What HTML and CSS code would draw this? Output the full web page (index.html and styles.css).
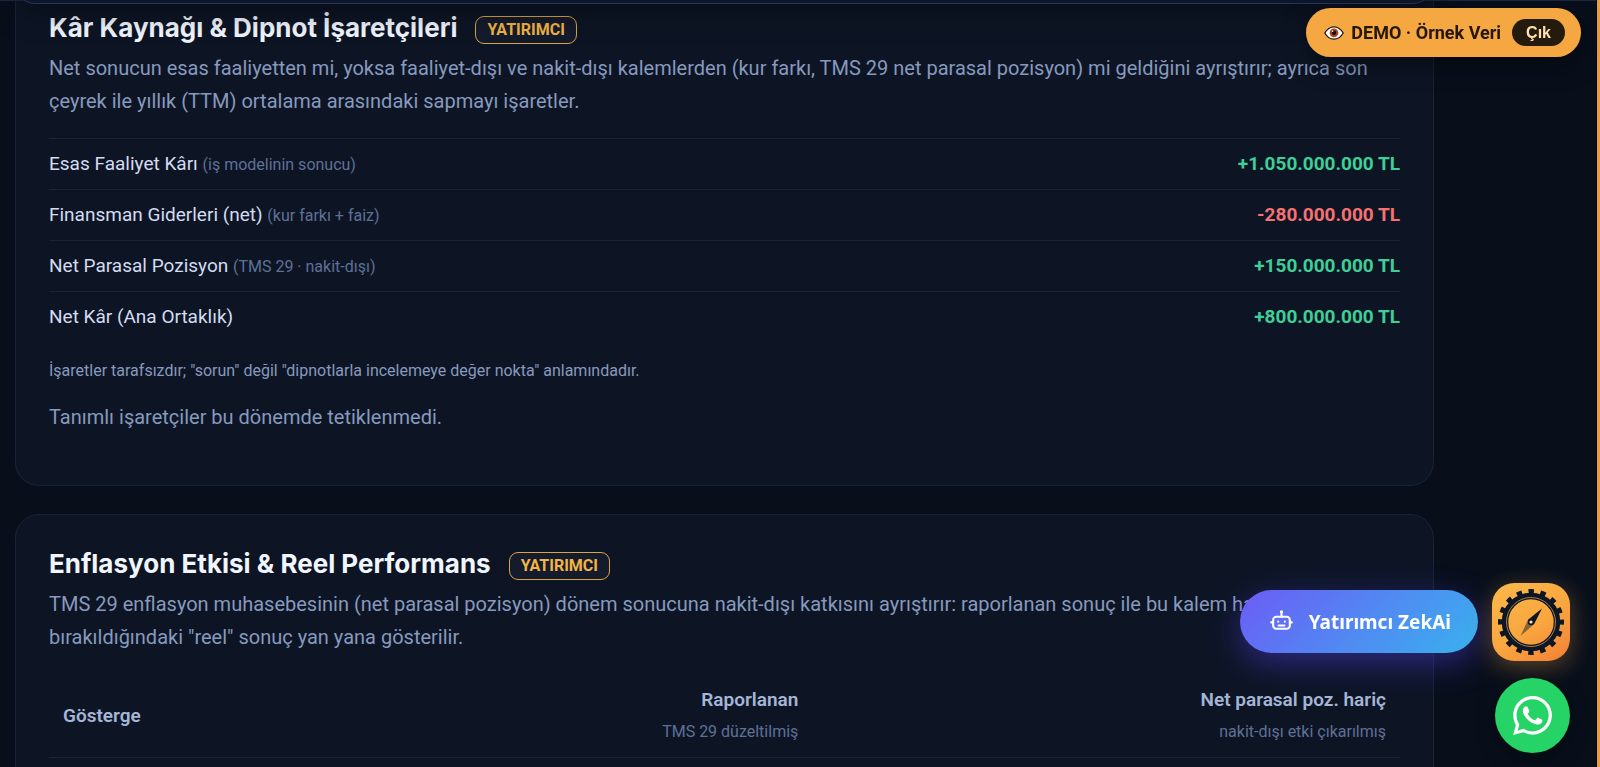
FILE: index.html
```
<!DOCTYPE html>
<html lang="tr">
<head>
<meta charset="utf-8">
<title>Yatırımcı Paneli</title>
<link rel="stylesheet" href="styles.css">
</head>
<body>
<div class="topbar"><div class="tabs"></div></div>

<main class="content">
  <section class="card card-first">
    <h2 class="card-title">Kâr Kaynağı &amp; Dipnot İşaretçileri <span class="badge">YATIRIMCI</span></h2>
    <p class="lead">Net sonucun esas faaliyetten mi, yoksa faaliyet-dışı ve nakit-dışı kalemlerden (kur farkı, TMS 29 net parasal pozisyon) mi geldiğini ayrıştırır; ayrıca son çeyrek ile yıllık (TTM) ortalama arasındaki sapmayı işaretler.</p>
    <dl class="rows">
      <div class="row"><dt>Esas Faaliyet Kârı <small>(iş modelinin sonucu)</small></dt><dd class="pos">+1.050.000.000 TL</dd></div>
      <div class="row"><dt>Finansman Giderleri (net) <small>(kur farkı + faiz)</small></dt><dd class="neg">-280.000.000 TL</dd></div>
      <div class="row"><dt>Net Parasal Pozisyon <small>(TMS 29 · nakit-dışı)</small></dt><dd class="pos">+150.000.000 TL</dd></div>
      <div class="row"><dt>Net Kâr (Ana Ortaklık)</dt><dd class="pos">+800.000.000 TL</dd></div>
    </dl>
    <p class="note">İşaretler tarafsızdır; "sorun" değil "dipnotlarla incelemeye değer nokta" anlamındadır.</p>
    <p class="lead">Tanımlı işaretçiler bu dönemde tetiklenmedi.</p>
  </section>

  <section class="card">
    <h2 class="card-title">Enflasyon Etkisi &amp; Reel Performans <span class="badge">YATIRIMCI</span></h2>
    <p class="lead">TMS 29 enflasyon muhasebesinin (net parasal pozisyon) dönem sonucuna nakit-dışı katkısını ayrıştırır: raporlanan sonuç ile bu kalem hariç bırakıldığındaki "reel" sonuç yan yana gösterilir.</p>
    <table class="compare">
      <thead>
        <tr>
          <th class="col-name" scope="col">Gösterge</th>
          <th class="col-num" scope="col">Raporlanan<small>TMS 29 düzeltilmiş</small></th>
          <th class="col-num" scope="col">Net parasal poz. hariç<small>nakit-dışı etki çıkarılmış</small></th>
        </tr>
      </thead>
    </table>
  </section>
</main>

<div class="edge"></div>

<div class="demo">
  <svg class="eye" viewBox="0 0 20 14" aria-hidden="true">
    <path d="M.8 7C3.200 2.800 6.300.8 10 .8S16.800 2.800 19.200 7c-2.400 4.200-5.500 6.200-9.200 6.200S3.200 11.200.8 7z" fill="#fff" stroke="#1a120a" stroke-width="1.200"/>
    <circle cx="10" cy="6.800" r="4.400" fill="#a8432a"/>
    <circle cx="10" cy="6.800" r="2.200" fill="#1a0d08"/>
    <circle cx="8.600" cy="5.300" r=".8" fill="#fff"/>
  </svg>
  <span>DEMO · Örnek Veri</span>
  <button class="exit" type="button">Çık</button>
</div>

<div class="dock">
  <button class="ai" type="button">
    <svg class="bot" viewBox="0 0 24 24" fill="none" stroke="#fff" stroke-width="2" stroke-linecap="round" stroke-linejoin="round" aria-hidden="true">
      <rect x="4" y="7.500" width="16" height="11.500" rx="3"/>
      <path d="M12 7.500V3M2 12.800h2M20 12.800h2M9.200 15.800h5.600"/>
      <path d="M8.800 12v.2M15.200 12v.2"/>
      <circle cx="12" cy="2.600" r=".5"/>
    </svg>
    <span>Yatırımcı ZekAi</span>
  </button>
  <div class="dock-side">
    <button class="compass" type="button" aria-label="Pusula">
      <svg viewBox="0 0 78 78" aria-hidden="true">
        <circle cx="39" cy="39" r="30.500" fill="none" stroke="#0d1624" stroke-width="5" stroke-dasharray="5.400 6.578" stroke-dashoffset="2.700"/>
        <circle cx="39" cy="39" r="26" fill="none" stroke="#0d1624" stroke-width="6.500"/>
        <circle cx="39" cy="39" r="24.500" fill="none" stroke="#d9973c" stroke-width=".8"/>
        <path d="M50 25.500 42 41.200 36 36.800z" fill="#0d1624"/>
        <path d="M28.500 53 42 41.200 36 36.800z" fill="#8a6330"/>
        <circle cx="39" cy="39" r="3.200" fill="#0d1624"/>
        <circle cx="39" cy="39" r="1.600" fill="#fbe3b0"/>
      </svg>
    </button>
    <a class="whatsapp" href="#whatsapp" aria-label="WhatsApp">
      <svg viewBox="0 0 24 24" fill="#fff" aria-hidden="true"><path d="M17.472 14.382c-.297-.149-1.758-.867-2.030-.967-.273-.099-.471-.148-.670.150-.197.297-.767.966-.940 1.164-.173.199-.347.223-.644.075-.297-.150-1.255-.463-2.390-1.475-.883-.788-1.480-1.761-1.653-2.059-.173-.297-.018-.458.130-.606.134-.133.298-.347.446-.520.149-.174.198-.298.298-.497.099-.198.050-.371-.025-.520-.075-.149-.669-1.612-.916-2.207-.242-.579-.487-.500-.669-.510-.173-.008-.371-.010-.570-.010-.198 0-.520.074-.792.372-.272.297-1.040 1.016-1.040 2.479 0 1.462 1.065 2.875 1.213 3.074.149.198 2.096 3.200 5.077 4.487.709.306 1.262.489 1.694.625.712.227 1.360.195 1.871.118.571-.085 1.758-.719 2.006-1.413.248-.694.248-1.289.173-1.413-.074-.124-.272-.198-.570-.347m-5.421 7.403h-.004a9.870 9.870 0 01-5.031-1.378l-.361-.214-3.741.982.998-3.648-.235-.374a9.860 9.860 0 01-1.510-5.260c.001-5.450 4.436-9.884 9.888-9.884 2.640 0 5.122 1.030 6.988 2.898a9.825 9.825 0 012.893 6.994c-.003 5.450-4.437 9.884-9.885 9.884m8.413-18.297A11.815 11.815 0 0012.050 0C5.495 0 .160 5.335.157 11.892c0 2.096.547 4.142 1.588 5.945L.057 24l6.305-1.654a11.882 11.882 0 005.683 1.448h.005c6.554 0 11.890-5.335 11.893-11.893a11.821 11.821 0 00-3.480-8.413z"/></svg>
    </a>
  </div>
</div>
</body>
</html>
```
FILE: styles.css
```
* { box-sizing: border-box; }
html, body { height: 100%; }
body {
  margin: 0;
  overflow: hidden;
  background: #080f1b;
  color: #d3dcf0;
  font-family: Roboto, "Noto Sans", sans-serif;
  font-size: 20px;
}
.topbar {
  position: absolute;
  top: 0;
  left: 0;
  right: 4px;
  height: 1px;
  background: #1c2942;
  z-index: 2;
}
.tabs {
  position: absolute;
  left: 15px;
  right: 163px;
  bottom: -3px;
  height: 56px;
  border: 1px solid #24365a;
  border-radius: 20px;
  background: #0e1729;
  box-shadow: 0 8px 30px rgba(0, 0, 0, .4);
}
.content {
  display: flex;
  flex-direction: column;
  gap: 28px;
  margin: 0 166px 0 15px;
}
.card {
  background: #0d1525;
  border: 1px solid #182338;
  border-radius: 24px;
  padding: 31px 33px 51px;
}
.card-first {
  border-top: 0;
  border-radius: 0 0 24px 24px;
  padding-top: 10px;
}
.card-title {
  display: flex;
  align-items: center;
  gap: 18px;
  margin: 0 0 6px;
  color: #f1f5fd;
  font: 700 26px/36px Inter, sans-serif;
}
.badge {
  margin-top: 4px;
  border: 1px solid #d9a441;
  border-radius: 9px;
  padding: 0 11px;
  background: #141b2c;
  color: #f2b445;
  font: 700 16px/26px Roboto, sans-serif;
}
.lead { margin: 0; color: #8799bd; font-size: 20px; line-height: 33px; }
.rows { margin: 20px 0 0; }
.row {
  display: flex;
  justify-content: space-between;
  border-top: 1px solid #182438;
  font-size: 19px;
  line-height: 50px;
}
.row dt small { color: #5f7095; font-size: 16px; line-height: 1; }
.row dd { margin: 0; font-weight: 700; }
.pos { color: #3ecf96; }
.neg { color: #f87171; }
.note { margin: 15px 0 16px; color: #8799bd; font-size: 16px; line-height: 28px; }
.compare { width: 100%; margin-top: 18px; border-collapse: collapse; table-layout: fixed; }
.compare th {
  padding: 12px 14px 9px;
  border-bottom: 1px solid #1a2638;
  color: #a5b5d6;
  font-size: 19px;
  font-weight: 600;
  line-height: 32px;
  text-align: right;
}
.compare .col-name { width: 13%; text-align: left; }
.compare small { display: block; color: #5f7095; font-size: 16px; font-weight: 400; }
.edge { position: fixed; top: 0; right: 0; bottom: 0; width: 4px; border-left: 1px solid #05080f; background: #e9a03b; z-index: 3; }
.demo {
  position: fixed;
  top: 8px;
  right: 19px;
  z-index: 4;
  display: flex;
  align-items: center;
  gap: 7px;
  height: 49px;
  padding: 0 16px 0 18px;
  border-radius: 25px;
  background: #f5a742;
  box-shadow: 0 8px 26px rgba(0, 0, 0, .45);
  color: #241708;
  font-size: 18px;
  font-weight: 700;
}
.eye { width: 20px; height: 14px; }
.exit {
  margin-left: 4px;
  height: 27px;
  padding: 0 14px;
  border: 0;
  border-radius: 14px;
  background: #241a0e;
  color: #fde0b0;
  font: 700 16px/27px "Liberation Sans", sans-serif;
}
.dock {
  position: fixed;
  right: 30px;
  bottom: 14px;
  z-index: 4;
  display: flex;
  align-items: flex-start;
  gap: 14px;
}
.ai {
  display: flex;
  align-items: center;
  gap: 15px;
  height: 63px;
  margin-top: 7px;
  padding: 0 27px 0 29px;
  border: 0;
  border-radius: 32px;
  background: linear-gradient(135deg, #6c5cf6, #38b2ee);
  box-shadow: 0 10px 32px rgba(84, 64, 240, .45);
  color: #fff;
  font: 700 19px/24px "Noto Sans", sans-serif;
}
.bot { width: 25px; height: 25px; }
.dock-side { display: flex; flex-direction: column; align-items: flex-end; gap: 17px; }
.compass {
  width: 78px;
  height: 78px;
  padding: 0;
  border: 0;
  border-radius: 22px;
  background: linear-gradient(145deg, #fbb94a, #f9a63f 55%, #f27f36);
  box-shadow: 0 6px 24px rgba(245, 167, 66, .35);
}
.compass svg { display: block; width: 100%; }
.whatsapp {
  display: grid;
  place-items: center;
  width: 75px;
  height: 75px;
  border-radius: 50%;
  background: #25d366;
  box-shadow: 0 6px 20px rgba(0, 0, 0, .4);
}
.whatsapp svg { width: 39px; height: 39px; }
```
